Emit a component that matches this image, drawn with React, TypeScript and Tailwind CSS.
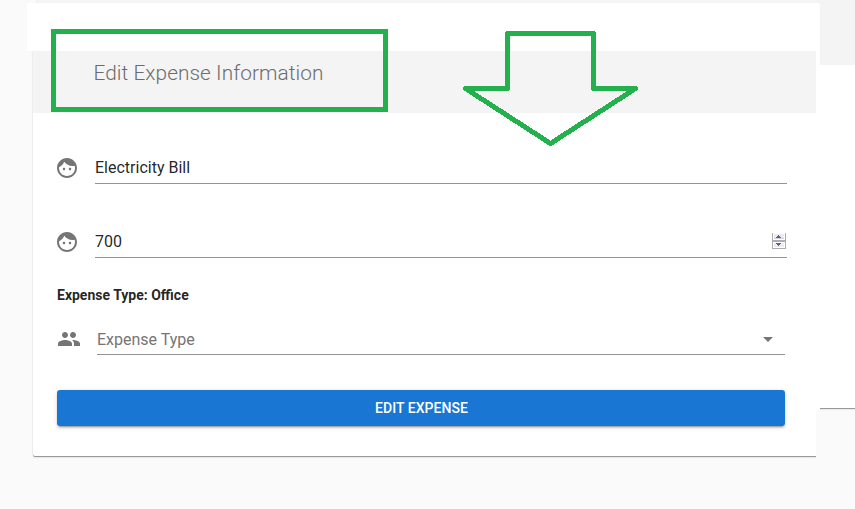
import { MdArrowDropDown, MdPeople } from "react-icons/md";

function FaceIcon() {
  return (
    <svg className="mt-1 ml-[-2px] size-6 shrink-0 fill-[#757575]" viewBox="0 0 24 24">
      <path d="M9 11.75c-.69 0-1.25.56-1.25 1.25s.56 1.25 1.25 1.25 1.25-.56 1.25-1.25-.56-1.25-1.25-1.25zm6 0c-.69 0-1.25.56-1.25 1.25s.56 1.25 1.25 1.25 1.25-.56 1.25-1.25-.56-1.25-1.25-1.25zM12 2C6.48 2 2 6.48 2 12s4.48 10 10 10 10-4.48 10-10S17.52 2 12 2zm0 18c-4.41 0-8-3.59-8-8 0-.29.02-.58.05-.86 2.36-1.05 4.23-2.98 5.21-5.37C11.07 8.33 14.05 10 17.42 10c.78 0 1.53-.09 2.25-.26.21.71.33 1.47.33 2.26 0 4.41-3.59 8-8 8z" />
    </svg>
  );
}

function TextField({ value, stepper = false }: { value: string; stepper?: boolean }) {
  return (
    <div className="flex h-8">
      <FaceIcon />
      <div className="ml-4 flex h-8 w-[692px] items-center justify-between border-b border-[#949494] text-base text-black/87">
        <span>{value}</span>
        {stepper && <Stepper />}
      </div>
    </div>
  );
}

function Stepper() {
  return (
    <svg className="mr-px mb-0.5 h-4 w-3.5" viewBox="0 0 14 16" shapeRendering="crispEdges">
      <path fill="#acacb1" d="M0 0h14v16H0z" />
      <path fill="#fff" d="M1 0h12v7H1zM1 9h12v6H1z" />
      <path fill="#ececec" d="M2 1h10v4H2zM2 10h10v4H2z" />
      <path fill="#d2d2d6" d="M2 5h10v1H2z" />
      <path fill="#4c62b0" d="M6 2h1v1H6zM5 3h3v1H5zM4 4h5v1H4zM4 10h5v1H4zM5 11h3v1H5zM6 12h1v1H6z" />
    </svg>
  );
}

export default function App() {
  return (
    <div className="relative h-[509px] w-[855px] overflow-hidden bg-[#fafafa] font-[Roboto,sans-serif]">
      <div className="flex">
        <div className="w-[820px]">
          <div className="ml-[37px] h-[3px] bg-[#f4f4f4] shadow-[-1px_0_1px_rgba(0,0,0,0.06)]" />
          <div className="ml-[27px] h-12 bg-white" />
          <div className="flex">
            <div className="w-[816px] overflow-x-clip">
              <main className="ml-[33px] h-[405px] rounded-bl-[2px] bg-white shadow-[0_1px_0_#999,0_2px_1px_rgba(0,0,0,0.08),-1px_0_1px_rgba(0,0,0,0.05)]">
                <header className="flex h-[62px] items-center bg-[#f4f4f4] pb-[18px] pl-[60.5px]">
                  <h1 className="text-[20.8px] leading-6 font-light tracking-[0.07px] text-[#6c6c6c]">
                    Edit Expense Information
                  </h1>
                </header>
                <form className="pt-[39px] pl-6">
                  <TextField value="Electricity Bill" />
                  <div className="h-[42px]" />
                  <TextField value="700" stepper />
                  <p className="mt-7 text-sm leading-[18px] font-bold text-black/87">Expense Type: Office</p>
                  <div className="mt-[19px] flex h-8 w-[728px]">
                    <MdPeople className="mt-1 size-6 shrink-0 text-[#757575]" />
                    <div className="ml-4 flex flex-1 items-center justify-between border-b border-[#949494] text-base text-[#757575]">
                      <span className="pt-0.5">Expense Type</span>
                      <MdArrowDropDown className="mr-[5.5px] size-6" />
                    </div>
                  </div>
                  <button
                    type="button"
                    className="mt-[35px] block h-9 w-[728px] rounded-[3px] bg-[#1976d2] pl-px text-sm font-medium tracking-[0.03px] text-white shadow-[0_3px_1px_-2px_rgba(0,0,0,0.2),0_2px_2px_0_rgba(0,0,0,0.14),0_1px_5px_0_rgba(0,0,0,0.12)]"
                  >
                    EDIT EXPENSE
                  </button>
                </form>
              </main>
            </div>
            <div className="h-[359px] w-1 bg-white" />
          </div>
        </div>
        <aside className="h-[409px] w-[35px] border-b border-[#999] bg-white shadow-[0_1px_1px_rgba(0,0,0,0.06)]">
          <div className="h-[65px] bg-[#f4f4f4]" />
        </aside>
      </div>
      <div className="absolute top-[29px] left-[51px] h-[83px] w-[337px] border-5 border-[#22b14c]" />
      <svg className="absolute top-[28px] left-[460px] h-[120px] w-[180px]" viewBox="460 28 180 120">
        <path
          d="M507.5 33.5H593.5V88.5H635.5L550.5 143.5L465.5 88.5H507.5Z"
          fill="none"
          stroke="#22b14c"
          strokeWidth="5"
          strokeLinejoin="round"
          shapeRendering="crispEdges"
        />
      </svg>
    </div>
  );
}
